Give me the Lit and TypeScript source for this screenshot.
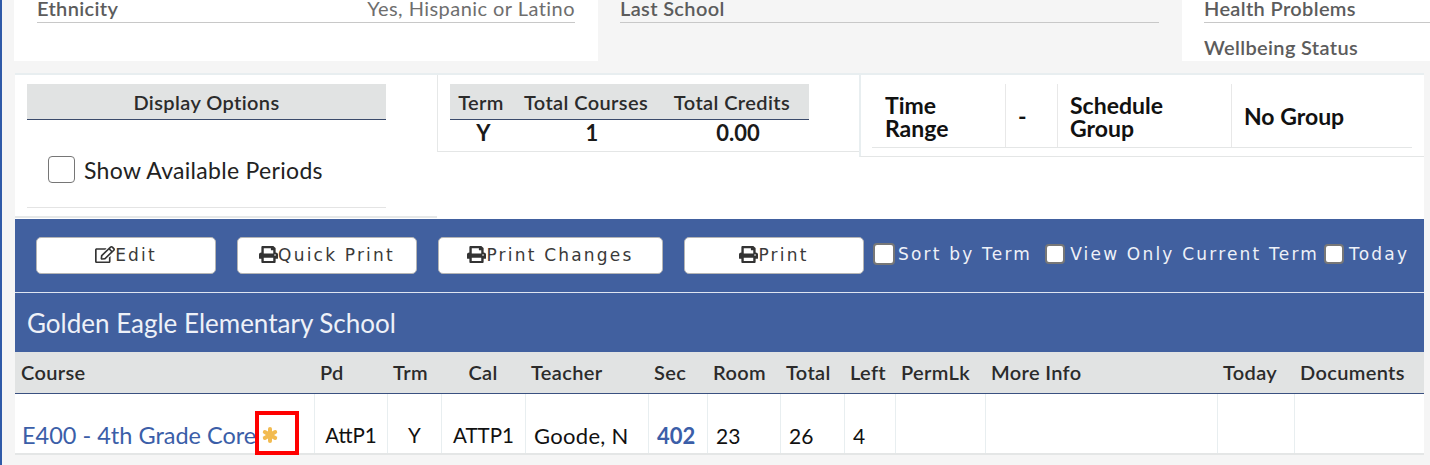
import { LitElement, html, css, svg } from 'lit';
import { customElement } from 'lit/decorators.js';

const PRINT = 'M448 192V77.25c0-8.49-3.37-16.62-9.37-22.63L393.37 9.37c-6-6-14.14-9.37-22.63-9.37H96C78.33 0 64 14.33 64 32v160c-35.35 0-64 28.65-64 64v112c0 8.84 7.16 16 16 16h48v96c0 17.67 14.33 32 32 32h320c17.67 0 32-14.33 32-32v-96h48c8.84 0 16-7.16 16-16V256c0-35.35-28.65-64-64-64zm-64 256H128v-96h256v96zm0-224H128V64h192v48c0 8.84 7.16 16 16 16h48v96zm48 72c-13.25 0-24-10.75-24-24 0-13.26 10.75-24 24-24s24 10.74 24 24c0 13.25-10.75 24-24 24z';
const EDIT = 'M402.3 344.9l32-32c5-5 13.7-1.5 13.7 5.7V464c0 26.5-21.5 48-48 48H48c-26.5 0-48-21.5-48-48V112c0-26.5 21.5-48 48-48h273.5c7.1 0 10.7 8.6 5.7 13.7l-32 32c-1.5 1.5-3.5 2.3-5.7 2.3H48v352h352V350.5c0-2.1.8-4.1 2.3-5.6zm156.6-201.8L296.3 405.7l-90.4 10c-26.2 2.9-48.5-19.2-45.6-45.6l10-90.4L432.9 17.1c22.9-22.9 59.9-22.9 82.7 0l43.2 43.2c22.9 22.9 22.9 60 .1 82.8zM460.1 174L402 115.9 216.2 301.8l-7.3 65.3 65.3-7.3L460.1 174zm64.8-79.7l-43.2-43.2c-4.1-4.1-10.8-4.1-14.8 0L436 82l58.1 58.1 30.9-30.9c4-4.2 4-10.8-.1-14.9z';

const printIcon = () =>
  svg`<svg class="ico" viewBox="0 0 512 512" preserveAspectRatio="none" aria-hidden="true"><path fill="currentColor" d=${PRINT}></path></svg>`;
const editIcon = () =>
  svg`<svg class="ico edit" viewBox="0 0 576 512" preserveAspectRatio="none" aria-hidden="true"><path fill="currentColor" d=${EDIT}></path></svg>`;

const COLUMNS = ['Course', 'Pd', 'Trm', 'Cal', 'Teacher', 'Sec', 'Room', 'Total', 'Left', 'PermLk', 'More Info', 'Today', 'Documents'];

@customElement('app-root')
export class AppRoot extends LitElement {
  static styles = css`
    :host {
      display: block;
      width: 1430px;
      height: 465px;
      overflow: hidden;
      box-sizing: border-box;
      background: #f5f5f5;
      border-left: 2px solid #2f5aa8;
      font-family: 'Lato', 'Liberation Sans', sans-serif;
      color: #111;
    }

    /* student info strip, cut off at the top by the scroll position */
    .info {
      display: flex;
      height: 61px;
      margin-left: 12px;
      overflow: hidden;
    }
    .info-panel {
      width: 584px;
      box-sizing: border-box;
      padding: 0 23px;
      background: #fff;
    }
    .info-panel.alt { background: #f5f5f5; padding-left: 22px; }
    .info-panel.last { width: 248px; padding: 0 0 0 22px; }
    .info-row {
      display: flex;
      justify-content: space-between;
      height: 22px;
      border-bottom: 1px solid #c8c8c8;
      font-size: 20px;
      line-height: 16px;
      font-weight: 600;
      letter-spacing: 0.35px;
      color: #5c5c5c;
    }
    .info-row .val { font-weight: 400; color: #6e6e6e; letter-spacing: 0.45px; }
    .info-row.plain { border-bottom: none; margin-top: 16px; }

    /* summary cards */
    .summary {
      display: flex;
      height: 146px;
      box-sizing: border-box;
      margin: 12px 6px 0 13px;
      border-top: 2px solid #e8eef0;
      background: #fff;
    }
    .card-head {
      background: #e1e3e3;
      border-bottom: 1px solid #3a4a6b;
      color: #2b2b2b;
      font-size: 20px;
      font-weight: 600;
      letter-spacing: 0.4px;
      box-sizing: border-box;
      height: 36px;
      line-height: 37px;
    }
    .display {
      width: 423px;
      height: 143px;
      box-sizing: border-box;
      padding: 9px 51px 0 12px;
      border-bottom: 2px solid #e6e8e8;
    }
    .display .card-head { text-align: center; }
    .display-body {
      display: flex;
      align-items: center;
      height: 88px;
      box-sizing: border-box;
      padding: 12px 0 0 21px;
      border-bottom: 1px solid #e4e4e4;
      font-size: 23px;
      letter-spacing: 0.3px;
      gap: 9px;
      color: #222;
    }
    .box {
      appearance: none;
      margin: 0;
      width: 27px;
      height: 27px;
      box-sizing: border-box;
      border: 1px solid #767676;
      border-radius: 4px;
      background: #fff;
    }
    .totals {
      width: 422px;
      height: 77px;
      box-sizing: border-box;
      padding: 9px 50px 0 12px;
      border-left: 1px solid #e6e8e8;
      border-bottom: 1px solid #e4e6e6;
    }
    .totals-grid {
      display: grid;
      grid-template-columns: 67px 150px 142px;
      text-align: center;
    }
    .totals-grid .card-head { padding-right: 12px; }
    .totals-grid .card-head:first-child { padding-right: 5px; }
    .totals-grid .val { font-size: 22px; font-weight: 700; line-height: 25px; color: #1a1a1a; }
    .group {
      flex: 1;
      height: 84px;
      margin-top: -2px;
      box-sizing: border-box;
      padding: 9px 12px 0 11px;
      border-top: 2px solid #e8eef0;
      border-left: 2px solid #e8eef0;
      border-bottom: 1px solid #e4e6e6;
    }
    .group-row {
      display: grid;
      grid-template-columns: 133px 52px 174px 181px;
      height: 63px;
      border-bottom: 1px solid #e4e6e6;
      font-size: 23px;
      line-height: 23px;
      font-weight: 700;
      color: #111;
    }
    .group-row > div {
      display: flex;
      align-items: center;
      padding: 2px 12px 0;
      border-left: 1px solid #e8e8e8;
    }
    .group-row > div:first-child { border-left: none; padding-left: 13px; }

    /* blue toolbar + school title */
    .blue {
      margin: 0 6px 0 13px;
      background: #41609f;
      color: #eef1f8;
    }
    .toolbar {
      display: flex;
      align-items: center;
      height: 74px;
      box-sizing: border-box;
      padding-left: 21px;
      border-bottom: 1px solid #dfe5f1;
      font-family: 'DejaVu Sans', 'Liberation Sans', sans-serif;
      font-size: 17px;
      letter-spacing: 2.2px;
    }
    .btn {
      display: flex;
      align-items: center;
      justify-content: center;
      width: 180px;
      height: 37px;
      margin-right: 21px;
      box-sizing: border-box;
      border: 1px solid #b5b5b5;
      border-radius: 5px;
      background: #fff;
      color: #3a3a3a;
      font: inherit;
      letter-spacing: 2.2px;
      padding: 0 0 2px;
    }
    .btn.wide { width: 225px; }
    .btn.end { margin-right: 9px; }
    .ico { width: 19px; height: 17px; display: block; color: #333; }
    .ico.edit { width: 20px; }
    .check {
      display: flex;
      align-items: center;
      gap: 5px;
      margin: 0 5px 3px 0;
      white-space: nowrap;
    }
    .check.first { gap: 3px; margin-right: 13px; }
    .check .box { width: 20px; height: 20px; border: 2px solid #777; border-radius: 4px; }
    .check.first .box { width: 22px; height: 22px; }
    .title {
      height: 59px;
      box-sizing: border-box;
      padding-left: 12px;
      font-size: 26px;
      line-height: 61px;
      color: #eef1f8;
    }

    /* schedule table */
    .sched {
      margin: 0 6px 0 13px;
      position: relative;
    }
    .row {
      display: grid;
      grid-template-columns: 299px 73px 54px 84px 123px 59px 73px 64px 51px 90px 232px 77px 130px;
    }
    .head {
      height: 42px;
      background: #e1e3e3;
      border-bottom: 1px solid #3a5080;
      box-sizing: border-box;
      font-size: 20px;
      font-weight: 600;
      letter-spacing: 0.35px;
      line-height: 41px;
      color: #2b2b2b;
    }
    .head > div { padding-left: 6px; white-space: nowrap; }
    .head > div.c { padding-left: 0; text-align: center; }
    .body {
      height: 61px;
      box-sizing: border-box;
      background: #fff;
      border-bottom: 2px solid #e4e6e6;
      font-size: 21px;
      line-height: 83px;
      color: #111;
    }
    .body > div {
      padding-left: 8px;
      border-left: 1px solid #e8eef0;
      white-space: nowrap;
      overflow: hidden;
    }
    .body > div:first-child { border-left: none; padding-left: 7px; font-size: 23.5px; }
    .body > div.c { padding-left: 0; text-align: center; font-size: 20.5px; }
    .body > div.name { font-size: 22px; letter-spacing: 0.3px; }
    .link { color: #3b5ea8; text-decoration: none; }
    .link.bold { font-weight: 700; font-size: 22px; }
    .star {
      width: 16px;
      height: 16px;
      margin-left: 6px;
      vertical-align: 1px;
    }
    /* annotation drawn on top of the screenshot */
    .mark {
      position: absolute;
      left: 240px;
      top: 59px;
      width: 44px;
      height: 44px;
      box-sizing: border-box;
      border: 4px solid #f00;
    }
  `;

  render() {
    return html`
      <div class="info">
        <div class="info-panel">
          <div class="info-row"><span>Ethnicity</span><span class="val">Yes, Hispanic or Latino</span></div>
        </div>
        <div class="info-panel alt">
          <div class="info-row"><span>Last School</span></div>
        </div>
        <div class="info-panel last">
          <div class="info-row"><span>Health Problems</span></div>
          <div class="info-row plain"><span>Wellbeing Status</span></div>
        </div>
      </div>

      <div class="summary">
        <div class="display">
          <div class="card-head">Display Options</div>
          <label class="display-body"><input class="box" type="checkbox" />Show Available Periods</label>
        </div>
        <div class="totals">
          <div class="totals-grid">
            <div class="card-head">Term</div>
            <div class="card-head">Total Courses</div>
            <div class="card-head">Total Credits</div>
            <div class="val">Y</div>
            <div class="val">1</div>
            <div class="val">0.00</div>
          </div>
        </div>
        <div class="group">
          <div class="group-row">
            <div>Time<br />Range</div>
            <div>-</div>
            <div>Schedule<br />Group</div>
            <div>No Group</div>
          </div>
        </div>
      </div>

      <div class="blue">
        <div class="toolbar">
          <button class="btn">${editIcon()}Edit</button>
          <button class="btn">${printIcon()}Quick Print</button>
          <button class="btn wide">${printIcon()}Print Changes</button>
          <button class="btn end">${printIcon()}Print</button>
          <label class="check first"><input class="box" type="checkbox" />Sort by Term</label>
          <label class="check"><input class="box" type="checkbox" />View Only Current Term</label>
          <label class="check"><input class="box" type="checkbox" />Today</label>
        </div>
        <div class="title">Golden Eagle Elementary School</div>
      </div>

      <div class="sched">
        <div class="row head">
          ${COLUMNS.map((c) => html`<div class=${c === 'Cal' ? 'c' : ''}>${c}</div>`)}
        </div>
        <div class="row body">
          <div>
            <a class="link" href="#">E400 - 4th Grade Core</a><svg class="star" viewBox="0 0 16 16" aria-hidden="true">
              <g stroke="#f2bb50" stroke-width="4" stroke-linecap="round">
                <line x1="8" y1="2" x2="8" y2="14"></line>
                <line x1="2.8" y1="5" x2="13.2" y2="11"></line>
                <line x1="2.8" y1="11" x2="13.2" y2="5"></line>
              </g>
            </svg>
          </div>
          <div class="c">AttP1</div>
          <div class="c">Y</div>
          <div class="c">ATTP1</div>
          <div class="name">Goode, N</div>
          <div><a class="link bold" href="#">402</a></div>
          <div>23</div>
          <div>26</div>
          <div>4</div>
          <div></div>
          <div></div>
          <div></div>
          <div></div>
        </div>
        <div class="mark"></div>
      </div>
    `;
  }
}
